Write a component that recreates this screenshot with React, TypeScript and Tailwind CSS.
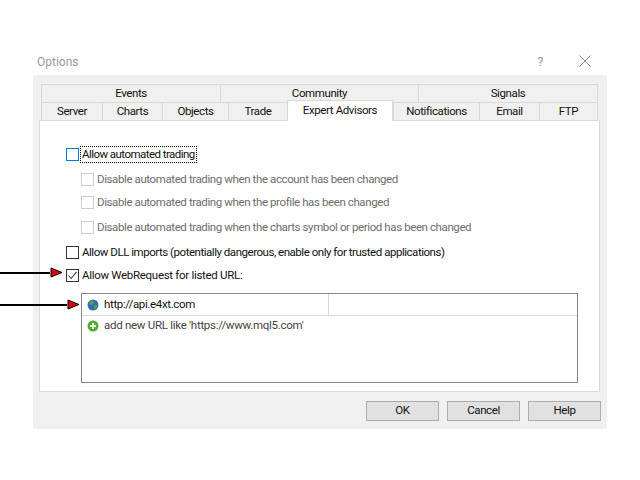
const font = "font-['Roboto','Liberation_Sans',sans-serif]";

function Tab({ label, className }: { label: string; className: string }) {
  return (
    <div className={"flex h-[18px] items-center justify-center border-t border-l border-[#d9d9d9] bg-[#f0f0f0] text-[#111] " + className}>
      {label}
    </div>
  );
}

function Check({ label, checked, disabled, focused, className }: { label: string; checked?: boolean; disabled?: boolean; focused?: boolean; className?: string }) {
  return (
    <div className={"flex items-center gap-[2px] " + (className ?? "")}>
      <div className={"flex h-[13px] w-[13px] items-center justify-center border " + (focused ? "border-[#0078d7]" : disabled ? "border-[#cccccc]" : "border-[#333]")}>
        {checked && (
          <svg width="11" height="11" viewBox="0 0 11 11" fill="none" stroke="#444" strokeWidth="1.1">
            <path d="M1.5 5.5 L4.2 8.5 L9.5 1.8" />
          </svg>
        )}
      </div>
      <span className={"px-px leading-[15px] " + (disabled ? "text-[#6d6d6d] " : "text-[#111] ") + (focused ? "outline-1 outline-dotted outline-black" : "")}>{label}</span>
    </div>
  );
}

function Arrow({ top, width }: { top: string; width: string }) {
  return (
    <div className={"absolute left-0 flex items-center " + top}>
      <div className={"h-[2px] bg-black " + width} />
      <svg width="13" height="11" viewBox="0 0 13 11">
        <path d="M1 1 L12 5.5 L1 10 Z" fill="#e00000" stroke="#000" strokeWidth="1" />
      </svg>
    </div>
  );
}

export default function App() {
  return (
    <div className={"relative h-[480px] w-[640px] overflow-hidden bg-white text-[11.5px] tracking-[-0.4px] " + font}>
      <div className="flex h-[75px] items-end justify-between pb-[4px] pl-[37px] pr-[49px] text-[#9a9a9a]">
        <span className="text-[12px] tracking-normal">Options</span>
        <div className="flex items-center gap-[36px]">
          <span className="text-[13px]">?</span>
          <svg width="12" height="12" viewBox="0 0 12 12" stroke="#8a8a8a" strokeWidth="1">
            <path d="M0.5 0.5 L11.5 11.5 M11.5 0.5 L0.5 11.5" />
          </svg>
        </div>
      </div>

      <div className="ml-[33px] h-[354px] w-[574px] bg-[#f0f0f0] px-[6px] pt-[9px]">
        <div className="flex flex-col">
          <div className="ml-[2px] flex w-[557px]">
            <Tab label="Events" className="w-[179px]" />
            <Tab label="Community" className="w-[198px]" />
            <Tab label="Signals" className="w-[180px] border-r" />
          </div>
          <div className="ml-[2px] flex w-[557px] items-end">
            <Tab label="Server" className="w-[61px]" />
            <Tab label="Charts" className="w-[60px]" />
            <Tab label="Objects" className="w-[66px]" />
            <Tab label="Trade" className="w-[59px]" />
            <div className="z-10 -mb-px -mt-[2px] flex h-[21px] w-[106px] items-start justify-center border-x border-t border-[#d9d9d9] bg-white pt-[1px] text-[#111]">Expert Advisors</div>
            <Tab label="Notifications" className="w-[86px]" />
            <Tab label="Email" className="w-[60px]" />
            <Tab label="FTP" className="w-[59px] border-r" />
          </div>
        </div>

        <div className="h-[272px] w-[561px] border border-[#d9d9d9] bg-white pl-[26px] pt-[26px]">
          <Check label="Allow automated trading" focused className="tracking-[-0.55px]" />
          <div className="ml-[15px] mt-[10px] flex flex-col gap-[8px]">
            <Check label="Disable automated trading when the account has been changed" disabled />
            <Check label="Disable automated trading when the profile has been changed" disabled />
            <Check label="Disable automated trading when the charts symbol or period has been changed" disabled className="mt-[2px]" />
          </div>
          <Check label="Allow DLL imports (potentially dangerous, enable only for trusted applications)" className="mt-[10px] tracking-[-0.47px]" />
          <Check label="Allow WebRequest for listed URL:" checked className="mt-[8px] tracking-[-0.3px]" />

          <div className="ml-[15px] mt-[10px] h-[90px] w-[497px] border border-[#828790] text-[#111]">
            <div className="flex h-[22px] border-b border-[#d9d9d9] tracking-[-0.35px]">
              <div className="flex w-[247px] items-center gap-[5px] border-r border-[#d9d9d9] pl-[5px]">
                <svg width="12" height="12" viewBox="0 0 12 12">
                  <circle cx="6" cy="6" r="5.5" fill="#2f6fb5" />
                  <path d="M2 3 L5 1.5 L7 3 L6 5.5 L3.5 6 Z M7 7 L10 6 L9.5 9 L7.5 10.5 Z" fill="#5aa83c" />
                </svg>
                <span>http://api.e4xt.com</span>
              </div>
            </div>
            <div className="flex h-[20px] items-center gap-[5px] pl-[5px] tracking-[-0.28px] text-[#444]">
              <svg width="12" height="12" viewBox="0 0 12 12">
                <circle cx="6" cy="6" r="5.5" fill="#4fae2e" />
                <path d="M6 3 V9 M3 6 H9" stroke="#fff" strokeWidth="2" />
              </svg>
              <span>add new URL like 'https://www.mql5.com'</span>
            </div>
          </div>
        </div>

        <div className="mt-[9px] flex justify-end gap-[8px]">
          <button className="h-[20px] w-[73px] border border-[#adadad] bg-[#e1e1e1] text-[#111]">OK</button>
          <button className="h-[20px] w-[73px] border border-[#adadad] bg-[#e1e1e1] text-[#111]">Cancel</button>
          <button className="h-[20px] w-[73px] border border-[#adadad] bg-[#e1e1e1] text-[#111]">Help</button>
        </div>
      </div>

      <Arrow top="top-[267px]" width="w-[50px]" />
      <Arrow top="top-[299px]" width="w-[67px]" />
    </div>
  );
}
